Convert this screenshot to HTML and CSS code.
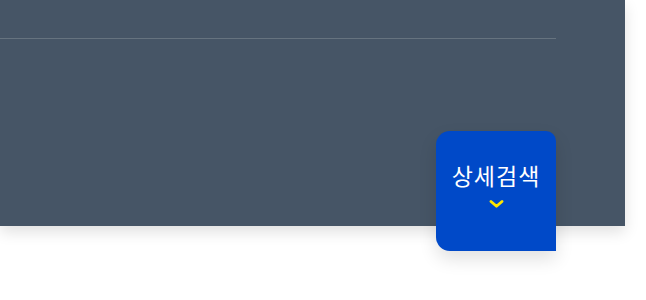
FILE: index.html
```html
<!DOCTYPE html>
<html lang="ko">
<head>
    <meta charset="UTF-8">
    <title>상세검색</title>
    <link rel="stylesheet" href="styles.css">
</head>
<body>
    <div class="page">
        <div class="search-panel">
            <div class="search-inner">
                <div class="search-line"></div>
            </div>
            <button class="detail-btn" type="button">
                <span class="detail-label">상세검색</span>
                <svg class="detail-arrow" width="15" height="8" viewBox="0 0 15 8">
                    <path d="M2 1.5 L7.5 6.3 L13 1.5" fill="none" stroke="#ffe600" stroke-width="2.8" stroke-linecap="round" stroke-linejoin="round"/>
                </svg>
            </button>
        </div>
    </div>
</body>
</html>
```

FILE: styles.css
```css
body {
    margin: 0;
    background: #fff;
    font-family: 'Noto Sans CJK KR', 'Noto Sans', sans-serif;
}

.page {
    min-height: 300px;
}

.search-panel {
    position: relative;
    width: 625px;
    height: 226px;
    background: #465566;
    box-shadow: 0 6px 14px rgba(0, 0, 0, 0.12);
}

.search-inner {
    padding-top: 38px;
    margin-right: 69px;
}

.search-line {
    height: 1px;
    background: #66737f;
}

.detail-btn {
    position: absolute;
    left: 436px;
    top: 131px;
    width: 120px;
    height: 120px;
    border: none;
    border-radius: 14px 10px 0 14px;
    background: #0049c8;
    color: #fff;
    display: flex;
    flex-direction: column;
    align-items: center;
    justify-content: flex-start;
    gap: 12px;
    padding: 31px 0 0;
    box-shadow: 0 8px 18px rgba(0, 0, 0, 0.12);
    cursor: pointer;
    font-family: inherit;
}

.detail-label {
    font-size: 23px;
    font-weight: 400;
    letter-spacing: 1px;
    line-height: 26px;
}

.detail-arrow {
    display: block;
}
```
